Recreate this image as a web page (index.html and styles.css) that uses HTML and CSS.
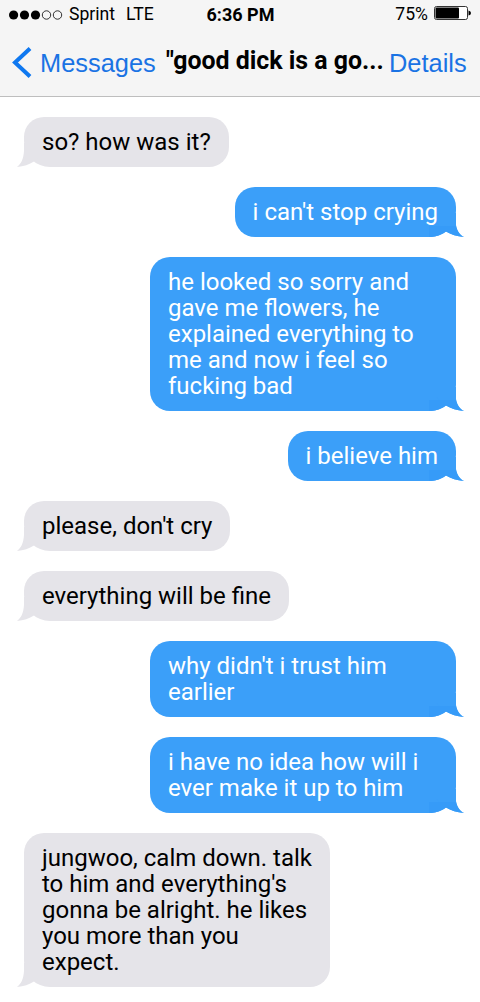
FILE: index.html
```
<!DOCTYPE html>
<html lang="en">
<head>
    <meta charset="utf-8">
    <title>Messages</title>
    <link rel="stylesheet" href="styles.css">
</head>
<body>
    <!-- tail shapes, used by every bubble -->
    <svg class="defs" width="0" height="0">
        <symbol id="tail-in" viewBox="0 0 28 24">
            <path d="M7 0 V8 C6.5 16 4 21 0 24 C7 23.5 12 21.5 17 18.5 L28 10 V0 Z" />
        </symbol>
        <symbol id="tail-out" viewBox="0 0 35 24">
            <path class="tail-base" d="M27 0 V12 C28 18 31 22 35 24 C28 23.5 22 21.5 17 18.5 L7 10 V0 Z" />
            <path class="tail-shade" d="M0 13 H27 C28 18 31 22 35 24 C28 23.5 22 21.5 17 18.5 C12 21.5 8 24 0 24 Z" />
        </symbol>
    </svg>

    <header>
        <div class="status">
            <div class="carrier">
                <svg width="54" height="12" viewBox="0 0 54 12">
                    <circle cx="4.6" cy="6" r="4.6" />
                    <circle cx="15.5" cy="6" r="4.6" />
                    <circle cx="26.5" cy="6" r="4.6" />
                    <circle class="empty" cx="37.5" cy="6" r="4.2" />
                    <circle class="empty" cx="48.5" cy="6" r="4.2" />
                </svg>
                <span class="name">Sprint</span>
                <span class="network">LTE</span>
            </div>
            <div class="time">6:36 PM</div>
            <div class="power">
                <span>75%</span>
                <svg width="38" height="14" viewBox="0 0 38 14">
                    <rect class="case" x="0.5" y="0.5" width="33" height="13" rx="2" />
                    <rect x="1.5" y="1.5" width="23.5" height="11" rx="1" />
                    <path d="M34.5 4.5 Q37 5 37 7 Q37 9 34.5 9.5 Z" />
                </svg>
            </div>
        </div>
        <nav>
            <a class="back">
                <svg width="20" height="32" viewBox="0 0 20 32">
                    <path d="M18 1.5 L3 15.5 L18 29.5" />
                </svg>
                <span>Messages</span>
            </a>
            <h1>"good dick is a go...</h1>
            <a class="details">Details</a>
        </nav>
    </header>

    <main>
        <div class="bubble in">so? how was it?<svg class="tail"><use href="#tail-in" /></svg></div>
        <div class="bubble out">i can't stop crying<svg class="tail"><use href="#tail-out" /></svg></div>
        <div class="bubble out wide">he looked so sorry and<br>gave me flowers, he<br>explained everything to<br>me and now i feel so<br>fucking bad<svg class="tail"><use href="#tail-out" /></svg></div>
        <div class="bubble out">i believe him<svg class="tail"><use href="#tail-out" /></svg></div>
        <div class="bubble in">please, don't cry<svg class="tail"><use href="#tail-in" /></svg></div>
        <div class="bubble in">everything will be fine<svg class="tail"><use href="#tail-in" /></svg></div>
        <div class="bubble out wide">why didn't i trust him<br>earlier<svg class="tail"><use href="#tail-out" /></svg></div>
        <div class="bubble out wide">i have no idea how will i<br>ever make it up to him<svg class="tail"><use href="#tail-out" /></svg></div>
        <div class="bubble in wide">jungwoo, calm down. talk<br>to him and everything's<br>gonna be alright. he likes<br>you more than you<br>expect.<svg class="tail"><use href="#tail-in" /></svg></div>
    </main>
</body>
</html>
```
FILE: styles.css
```
* {
    box-sizing: border-box;
}
body {
    margin: 0;
    background-color: #fff;
    color: #000;
    font-family: Roboto, sans-serif;
}
.defs {
    position: absolute;
}
header {
    height: 97px;
    background-color: #f5f5f5;
    border-bottom: 1px solid #bebebe;
}
.status {
    display: grid;
    grid-template-columns: 1fr auto 1fr;
    align-items: center;
    height: 28px;
    padding: 0 8px 0 9px;
    font-size: 18px;
    white-space: nowrap;
}
.carrier, .power {
    display: flex;
    align-items: center;
    font-size: 17.6px;
}
.carrier svg {
    margin-top: 2px;
}
.carrier .empty {
    fill: none;
    stroke: #000;
    stroke-width: 0.8;
}
.name {
    margin-left: 6px;
}
.network {
    margin-left: 11px;
}
.time {
    font-weight: 700;
}
.power {
    justify-content: flex-end;
    gap: 6px;
}
.power svg {
    margin-top: -2px;
}
.case {
    fill: #fff;
    stroke: #333;
}
nav {
    display: flex;
    align-items: center;
    height: 70px;
    padding-left: 12px;
    white-space: nowrap;
}
nav a {
    color: #1a73e4;
    font-family: "Liberation Sans", Arial, sans-serif;
    font-size: 25.4px;
}
.back {
    display: flex;
    align-items: center;
    gap: 8px;
    width: 154px;
}
.back path {
    fill: none;
    stroke: #0f78f0;
    stroke-width: 4;
}
h1 {
    width: 223px;
    margin: 0;
    padding-bottom: 5px;
    font-size: 24.9px;
    font-weight: 700;
}
main {
    display: flex;
    flex-direction: column;
    align-items: flex-start;
    gap: 20px;
    padding: 20px 24px 15px;
}
.bubble {
    position: relative;
    isolation: isolate;
    padding: 12px 18px;
    border-radius: 20px;
    font-size: 24px;
    line-height: 26px;
    white-space: nowrap;
}
.wide {
    width: 306px;
}
.in {
    background-color: #e5e4e9;
    border-bottom-left-radius: 26px;
}
.out {
    align-self: flex-end;
    background-color: #3b9ff9;
    border-bottom-right-radius: 26px;
    color: #fff;
}
.tail {
    position: absolute;
    z-index: -1;
    bottom: 0;
    height: 24px;
}
.in .tail {
    left: -7px;
    width: 28px;
    fill: #e5e4e9;
}
.out .tail {
    right: -8px;
    width: 35px;
}
.tail-base {
    fill: #3b9ff9;
}
.tail-shade {
    fill: #369bf8;
}
```
